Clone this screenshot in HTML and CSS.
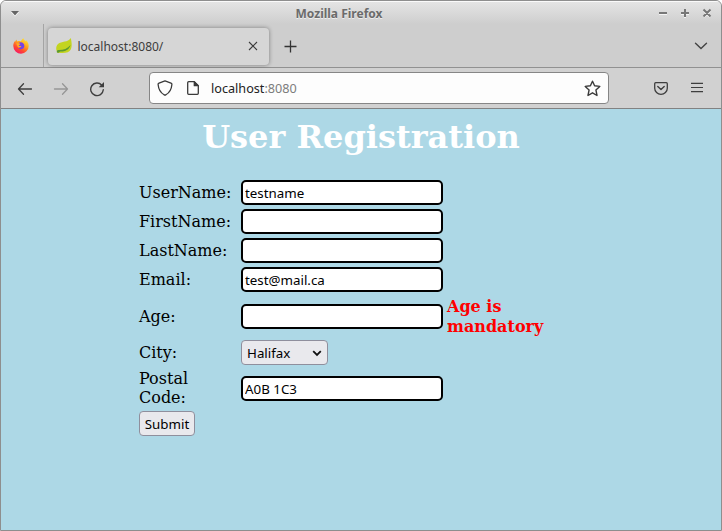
FILE: index.html
```html
<!DOCTYPE html>
<html lang="en">
<head>
<meta charset="utf-8">
<title>Mozilla Firefox</title>
<link rel="stylesheet" href="styles.css">
</head>
<body>
<div class="window">
  <header class="titlebar">
    <svg class="win-menu" width="10" height="7" viewBox="0 0 10 7"><path d="M1 2h8L5 6.500z" fill="#fff"/><path d="M1 1h8L5 5.500z" fill="#666"/></svg>
    <span class="title">Mozilla Firefox</span>
    <svg class="win-buttons" width="54" height="12" viewBox="0 0 54 12" fill="none" stroke-width="2">
      <g stroke="#f4f4f4" transform="translate(0 1)"><path d="M1 6h8M23 6h8M27 2v8M46 3l6 6M52 3l-6 6"/></g>
      <path stroke="#777" d="M1 6h8M23 6h8M27 2v8M45.500 2.500l7 7M52.500 2.500l-7 7"/>
    </svg>
  </header>
  <nav class="tabs">
    <div class="pinned">
      <svg width="16" height="16" viewBox="0 0 16 16">
        <defs>
          <linearGradient id="fire" x1=".85" y1="0" x2=".25" y2="1"><stop offset="0" stop-color="#fff044"/><stop offset=".4" stop-color="#ffa51e"/><stop offset=".72" stop-color="#ff4632"/><stop offset="1" stop-color="#f5156c"/></linearGradient>
        </defs>
        <path fill="url(#fire)" d="M10.500.2c.3 1.400 1.300 2 2.200 3l.3-1c1.700 1.300 2.700 3.400 2.700 5.700A7.700 7.700 0 0 1 .3 8c0-2.100.6-3.600 1.600-4.900v1l1.500-2.500c.1.800.4 1.400 1 1.800 1-.5 2.500-.6 3.500 0 .6-1.400 1.400-2.500 2.600-3.200z"/>
        <path fill="#7542e5" d="M5.200 5.200c1.500-1.200 3.900-1.200 5.200.2 1.400 1.500 1.200 4-.2 5.200-1.700 1.300-4.300.8-5.200-1.300 1 .6 2.400.4 3.200-.6H6.500c-.9-.2-1.200-.8-.9-1.500.4-.5 1-.4 1.700-.9-.3-.7-1-1.100-2.100-1.100z"/>
        <path fill="#ffad22" d="M3.200 5.500c1.300-.6 3.200-.3 4.200.8-.7.700-1.700.4-1.800 1.200.3.800 1.700.5 2.800.6-.8 1.400-2.100 1.500-3.300 1.300z"/>
      </svg>
    </div>
    <div class="tab">
      <svg width="16" height="16" viewBox="0 0 16 16"><path fill="#c3d420" d="M14.700 0C15.600 3.500 16.300 8 14.900 11.300 13.200 15 8 15.700 1.800 14.700-.3 12.500-.4 8.300 2 6 5.500 3 12 4.600 14.700 0z"/><path fill="#5c9a30" d="M1.600 12c5 .3 9.800-1 12.900-5-1.300 4.800-5.300 6.700-10.300 6.600L2 15.100l-1.400-1z"/></svg>
      <span class="tab-name">localhost:8080/</span>
      <svg width="10" height="10" viewBox="0 0 10 10" fill="none" stroke="#3d3d3d" stroke-width="1.100"><path d="M1 1l8 8M9 1L1 9"/></svg>
    </div>
    <svg class="new-tab" width="13" height="13" viewBox="0 0 13 13" fill="none" stroke="#333" stroke-width="1.300"><path d="M.5 6.500h12M6.500.5v12"/></svg>
    <svg class="all-tabs" width="14" height="8" viewBox="0 0 14 8" fill="none" stroke="#444" stroke-width="1.400" stroke-linecap="round"><path d="M1.500 1.200L7 6.600l5.500-5.400"/></svg>
  </nav>
  <div class="toolbar">
    <svg class="back" width="16" height="14" viewBox="0 0 16 14" fill="none" stroke="#3e3e3e" stroke-width="1.300" stroke-linecap="round" stroke-linejoin="round"><path d="M14.500 7H1.500M6.500 1.800L1.500 7l5 5.200"/></svg>
    <svg class="forward" width="16" height="14" viewBox="0 0 16 14" fill="none" stroke="#969696" stroke-width="1.300" stroke-linecap="round" stroke-linejoin="round"><path d="M1.500 7h13M9.500 1.800l5 5.200-5 5.200"/></svg>
    <svg class="reload" width="16" height="16" viewBox="0 0 16 16" fill="none" stroke="#3e3e3e" stroke-width="1.400" stroke-linecap="round"><path d="M12.800 4.200A6.300 6.300 0 1 0 14.300 8.800"/><path fill="#3e3e3e" stroke="none" d="M15 1v5.300H9.700z"/></svg>
    <div class="urlbar">
      <svg width="16" height="16" viewBox="0 0 16 16" fill="none" stroke="#3a3a3a" stroke-width="1.300" stroke-linejoin="round"><path d="M8 .9l6 2.200c.7.300 1 .6.900 1.400-.4 4.500-2 8-6 10.300-.6.300-1.200.3-1.800 0-4-2.300-5.600-5.800-6-10.300-.1-.8.200-1.100.9-1.400z"/></svg>
      <svg class="page-icon" width="12" height="14" viewBox="0 0 12 14" fill="none" stroke="#3a3a3a" stroke-width="1.300" stroke-linejoin="round"><path d="M1.700.7H7.300L11.300 4.700v7.600q0 1-1 1H1.700q-1 0-1-1V1.700q0-1 1-1z"/><path fill="#3a3a3a" d="M7.300.9v3.800h3.800z"/></svg>
      <span class="address">localhost<span class="port">:8080</span></span>
      <svg class="star" width="17" height="17" viewBox="0 0 17 17" fill="none" stroke="#3a3a3a" stroke-width="1.400" stroke-linejoin="round"><path d="M8.500 1.200l2.100 4.600 5.200.6-3.900 3.500 1.100 5.600-4.500-2.700L4 15.500l1.100-5.600L1.200 6.400l5.200-.6z"/></svg>
    </div>
    <svg class="pocket" width="14" height="13" viewBox="0 0 14 13" fill="none" stroke="#3e3e3e" stroke-width="1.300" stroke-linecap="round" stroke-linejoin="round"><path d="M1.700.7h10.600q1 0 1 1v4.500a6.300 6.100 0 0 1-12.600 0V1.700q0-1 1-1z"/><path d="M3.800 4.500L7 7.500l3.200-3" stroke-width="1.400"/></svg>
    <svg class="menu" width="12" height="11" viewBox="0 0 12 11" stroke="#3e3e3e" stroke-width="1.200"><path d="M0 1.300h12M0 5.500h12M0 9.700h12"/></svg>
  </div>
  <main class="page">
    <h1>User Registration</h1>
    <form class="form">
      <label for="user">UserName:</label><input id="user" type="text" value="testname"><span></span>
      <label for="first">FirstName:</label><input id="first" type="text"><span></span>
      <label for="last">LastName:</label><input id="last" type="text"><span></span>
      <label for="email">Email:</label><input id="email" type="text" value="test@mail.ca"><span></span>
      <label for="age">Age:</label><input id="age" type="text"><strong class="error">Age is mandatory</strong>
      <label for="city">City:</label>
      <div class="select" id="city">Halifax<svg width="10" height="7" viewBox="0 0 10 7" fill="none" stroke="#111" stroke-width="1.800"><path d="M1.200 1.200L5 5l3.800-3.800"/></svg></div><span></span>
      <label for="postal">Postal Code:</label><input id="postal" type="text" value="A0B 1C3"><span></span>
      <button type="button">Submit</button>
    </form>
  </main>
</div>
</body>
</html>
```
FILE: styles.css
```css
* { box-sizing: border-box; }
body { margin: 0; background: #fff; font-family: "Noto Sans", sans-serif; }
svg { display: block; flex: none; }
.window {
  width: 722px; height: 531px; overflow: hidden;
  display: flex; flex-direction: column;
  border: 1px solid #8e8e8e; border-radius: 6px 6px 0 0;
  background: #cecece;
}
.titlebar {
  height: 23px; flex: none; display: flex; align-items: center;
  padding: 0 9px 0 9px;
  border-top: 1px solid #fafafa;
  background: linear-gradient(#e4e4e4, #cecece);
}
.title {
  flex: 1; padding: 2px 0 0; text-align: center;
  font-size: 12px; font-weight: 700; line-height: 20px;
  color: #6b6b6b; text-shadow: 0 1px #eee;
}
.tabs { height: 44px; flex: none; display: flex; align-items: center; border-bottom: 1px solid #919191; }
.pinned { width: 43px; height: 43px; padding: 14px 0 0 12px; border-right: 1px solid #a5a5a5; }
.tab {
  width: 221px; height: 37px; margin: 1px 0 0 4px; padding: 0 11px 0 8px;
  display: flex; align-items: center;
  background: #d6d6d6; border-radius: 4px;
  box-shadow: 0 0 4px rgba(0, 0, 0, .4);
}
.tab-name { flex: 1; margin-left: 5.500px; font-size: 12px; color: #3d3d3d; }
.new-tab { margin: 1px 0 0 15px; }
.all-tabs { margin: 1px 13px 0 auto; }
.toolbar {
  height: 41px; flex: none; display: flex; align-items: center;
  background: #d1d1d1; border-bottom: 1px solid #828282;
}
.back { margin: 1px 0 0 16px; }
.forward { margin: 1px 0 0 20px; }
.reload { margin: 1px 0 0 20px; }
.urlbar {
  width: 460px; height: 32px; margin-left: 44px; padding: 0 7px;
  display: flex; align-items: center;
  background: #fdfdfd; border: 1px solid #868686; border-radius: 4px;
}
.page-icon { margin-left: 14px; }
.address { flex: 1; margin-left: 12px; font-size: 12.650px; color: #222; }
.port { color: #7c7c7c; }
.pocket { margin: 1px 0 0 45px; }
.menu { margin: -1px 0 0 23px; }
.page { flex: 1; background: #add8e6; color: #000; font: 16px/19px "DejaVu Serif", serif; }
h1 { margin: 9px 0 24px; font-size: 32px; line-height: 38px; text-align: center; color: #fff; }
.form {
  margin-left: 138px;
  display: grid; grid-template-columns: 98px 202px 120px; column-gap: 4px; row-gap: 4px;
  grid-template-rows: repeat(4, 25px) 40px 25px 38px 25px;
  align-items: center;
}
.form input {
  width: 202px; height: 25px; padding: 1px 2px;
  border: 2px solid #000; border-radius: 5px; background: #fff;
  font: 13.333px "Noto Sans", sans-serif; color: #000;
}
#age, #postal { margin-top: 1px; }
.error { padding-top: 2px; line-height: 20px; color: #f00; }
.select, .form button {
  height: 25px; border: 1px solid #8f8f9d; border-radius: 4px;
  background: #e9e9ed; color: #000; font: 13.333px "Noto Sans", sans-serif;
}
.select {
  width: 87px; padding: 1px 5px 0 5px;
  display: flex; align-items: center; justify-content: space-between;
}
.form button { width: 56px; padding: 1px 0 0; }
```
